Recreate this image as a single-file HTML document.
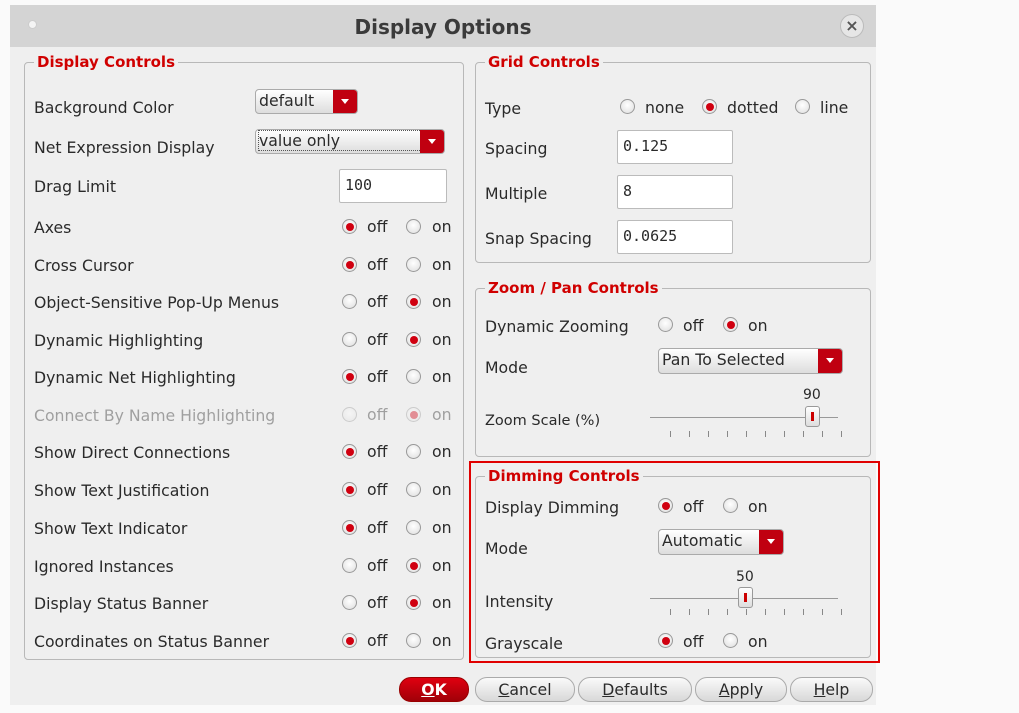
<!DOCTYPE html><html><head><style>
*{box-sizing:border-box;margin:0;padding:0}
body{width:1019px;height:713px;background:#fafafa;position:relative;overflow:hidden;font-family:"DejaVu Sans","Liberation Sans",sans-serif;font-size:15.7px;color:#2a2a2a}
.abs{position:absolute}
#win{left:10px;top:5px;width:866px;height:700px;background:#efefef;border-top:1px solid #222;}
#title{left:10px;top:5px;width:866px;height:42px;background:#d4d4d4;text-align:center;font-weight:bold;font-size:20px;line-height:44px;color:#3a3a3a}
.grp{border:1px solid #b8b8b8;border-radius:4px}
.leg{background:#efefef;color:#d00000;font-weight:bold;font-size:15px;padding:0 3px;line-height:18px}
.lbl{white-space:nowrap;line-height:18px;margin-top:1px}
.r{width:15px;height:15px;border-radius:50%;border:1px solid #999;background:radial-gradient(circle at 50% 40%,#fff,#ddd)}
.r.on::after{content:"";position:absolute;left:2.5px;top:2.5px;width:8px;height:8px;border-radius:50%;background:#d00010}
.dis{opacity:.4}
.in{background:#fff;border:1px solid #bbb;border-radius:2px;font-family:"DejaVu Sans Mono","Liberation Mono",monospace;font-size:15px;padding:6px 5px;line-height:18px}
.cb{border:1px solid #aaa;border-radius:4px;background:linear-gradient(#fff,#ddd);line-height:22px;padding-left:3px;font-size:15.7px}
.cb .ar{position:absolute;right:0;top:0;bottom:0;width:24px;background:#c00010;border-radius:0 3px 3px 0}
.cb .ar::after{content:"";position:absolute;left:8px;top:9px;border:4px solid transparent;border-top:5px solid #fff;border-bottom:0}
.btn{height:25px;border:1px solid #aaa;border-radius:12px;background:linear-gradient(#fafafa,#d8d8d8);text-align:center;line-height:23px;font-size:15.7px}
.tick{width:1px;height:6px;background:#888}
</style></head><body>
<div class="abs" id="win"></div>
<div class="abs" id="title">Display Options</div>
<div class="abs" style="left:28px;top:20px;width:9px;height:9px;border-radius:50%;background:#f4f4f4;border:1px solid #ccc"></div>
<div class="abs" style="left:840px;top:14px;width:24px;height:24px;border-radius:50%;background:#e6e6e6;border:1px solid #bbb;text-align:center;line-height:21px;font-size:16px;font-weight:bold;color:#555">×</div>

<div class="abs grp" style="left:24px;top:62px;width:440px;height:598px"></div>
<div class="abs leg" style="left:34px;top:53px">Display Controls</div>

<div class="abs grp" style="left:475px;top:62px;width:396px;height:201px"></div>
<div class="abs leg" style="left:485px;top:53px">Grid Controls</div>
<div class="abs grp" style="left:475px;top:288px;width:396px;height:169px"></div>
<div class="abs leg" style="left:485px;top:279px">Zoom / Pan Controls</div>
<div class="abs" style="left:469px;top:461px;width:411px;height:202px;border:2px solid #e00000"></div>
<div class="abs grp" style="left:475px;top:476px;width:396px;height:182px"></div>
<div class="abs leg" style="left:485px;top:467px">Dimming Controls</div>

<div class="abs lbl" style="left:34px;top:98px">Background Color</div>
<div class="abs cb" style="left:255px;top:89px;width:103px;height:25px">default<div class="ar"></div></div>
<div class="abs lbl" style="left:34px;top:138px">Net Expression Display</div>
<div class="abs cb" style="left:255px;top:129px;width:190px;height:25px"><span style="outline:1px dotted #555">value only&nbsp;&nbsp;&nbsp;&nbsp;&nbsp;&nbsp;&nbsp;&nbsp;&nbsp;&nbsp;&nbsp;&nbsp;&nbsp;&nbsp;&nbsp;&nbsp;&nbsp;</span><div class="ar"></div></div>
<div class="abs lbl" style="left:34px;top:177px">Drag Limit</div>
<div class="abs in" style="left:339px;top:169px;width:108px;height:34px">100</div>

<div id="rows"></div>

<div class="abs lbl" style="left:485px;top:99px">Type</div>
<div class="abs r" style="left:620px;top:99px"></div><div class="abs lbl" style="left:645px;top:98px">none</div>
<div class="abs r on" style="left:702px;top:99px"></div><div class="abs lbl" style="left:727px;top:98px">dotted</div>
<div class="abs r" style="left:795px;top:99px"></div><div class="abs lbl" style="left:820px;top:98px">line</div>
<div class="abs lbl" style="left:485px;top:139px">Spacing</div>
<div class="abs in" style="left:617px;top:130px;width:116px;height:34px">0.125</div>
<div class="abs lbl" style="left:485px;top:184px">Multiple</div>
<div class="abs in" style="left:617px;top:175px;width:116px;height:34px">8</div>
<div class="abs lbl" style="left:485px;top:229px">Snap Spacing</div>
<div class="abs in" style="left:617px;top:220px;width:116px;height:34px">0.0625</div>

<div class="abs lbl" style="left:485px;top:317px">Dynamic Zooming</div>
<div class="abs r" style="left:658px;top:317px"></div><div class="abs lbl" style="left:683px;top:316px">off</div>
<div class="abs r on" style="left:723px;top:317px"></div><div class="abs lbl" style="left:748px;top:316px">on</div>
<div class="abs lbl" style="left:485px;top:358px">Mode</div>
<div class="abs cb" style="left:658px;top:348px;width:185px;height:26px">Pan To Selected<div class="ar"></div></div>
<div class="abs lbl" style="left:803px;top:385px;font-size:14px">90</div>
<div class="abs lbl" style="left:485px;top:411px;font-size:14.5px">Zoom Scale (%)</div>
<div class="abs" style="left:650px;top:417px;width:188px;height:1px;background:#999"></div>
<div class="abs" style="left:805px;top:406px;width:15px;height:21px;border:1px solid #999;border-radius:3px;background:linear-gradient(#fff,#ddd)"><div class="abs" style="left:5px;top:5px;width:3px;height:9px;background:#c00"></div></div>
<div id="t1"></div>

<div class="abs lbl" style="left:485px;top:498px">Display Dimming</div>
<div class="abs r on" style="left:658px;top:498px"></div><div class="abs lbl" style="left:683px;top:497px">off</div>
<div class="abs r" style="left:723px;top:498px"></div><div class="abs lbl" style="left:748px;top:497px">on</div>
<div class="abs lbl" style="left:485px;top:539px">Mode</div>
<div class="abs cb" style="left:658px;top:529px;width:126px;height:26px">Automatic<div class="ar"></div></div>
<div class="abs lbl" style="left:736px;top:567px;font-size:14px">50</div>
<div class="abs lbl" style="left:485px;top:592px">Intensity</div>
<div class="abs" style="left:650px;top:598px;width:188px;height:1px;background:#999"></div>
<div class="abs" style="left:738px;top:587px;width:15px;height:21px;border:1px solid #999;border-radius:3px;background:linear-gradient(#fff,#ddd)"><div class="abs" style="left:5px;top:5px;width:3px;height:9px;background:#c00"></div></div>
<div id="t2"></div>
<div class="abs lbl" style="left:485px;top:634px">Grayscale</div>
<div class="abs r on" style="left:658px;top:633px"></div><div class="abs lbl" style="left:683px;top:632px">off</div>
<div class="abs r" style="left:723px;top:633px"></div><div class="abs lbl" style="left:748px;top:632px">on</div>

<div class="abs btn" style="left:399px;top:677px;width:70px;background:linear-gradient(#e00010,#a00008);border-color:#900;color:#fff;font-weight:bold"><u>O</u>K</div>
<div class="abs btn" style="left:475px;top:677px;width:100px"><u>C</u>ancel</div>
<div class="abs btn" style="left:578px;top:677px;width:114px"><u>D</u>efaults</div>
<div class="abs btn" style="left:695px;top:677px;width:92px"><u>A</u>pply</div>
<div class="abs btn" style="left:790px;top:677px;width:83px"><u>H</u>elp</div>

<script>
var rows=[["Axes",227,1],["Cross Cursor",265,1],["Object-Sensitive Pop-Up Menus",302,0],["Dynamic Highlighting",340,0],["Dynamic Net Highlighting",377,1],["Connect By Name Highlighting",415,0,1],["Show Direct Connections",452,1],["Show Text Justification",490,1],["Show Text Indicator",528,1],["Ignored Instances",566,0],["Display Status Banner",603,0],["Coordinates on Status Banner",641,1]];
var h="";rows.forEach(function(r){var y=r[1],d=r[3]?" dis":"";
h+='<div class="abs lbl'+d+'" style="left:34px;top:'+(y-9)+'px">'+r[0]+'</div>';
h+='<div class="abs r'+(r[2]?' on':'')+d+'" style="left:342px;top:'+(y-8)+'px"></div><div class="abs lbl'+d+'" style="left:367px;top:'+(y-10)+'px">off</div>';
h+='<div class="abs r'+(r[2]?'':' on')+d+'" style="left:406px;top:'+(y-8)+'px"></div><div class="abs lbl'+d+'" style="left:432px;top:'+(y-10)+'px">on</div>';});
document.getElementById("rows").outerHTML=h;
function t(id,y){var s="";for(var i=0;i<10;i++)s+='<div class="abs tick" style="left:'+(670+i*19)+'px;top:'+y+'px"></div>';document.getElementById(id).outerHTML=s;}
t("t1",431);t("t2",609);
</script>
</body></html>
